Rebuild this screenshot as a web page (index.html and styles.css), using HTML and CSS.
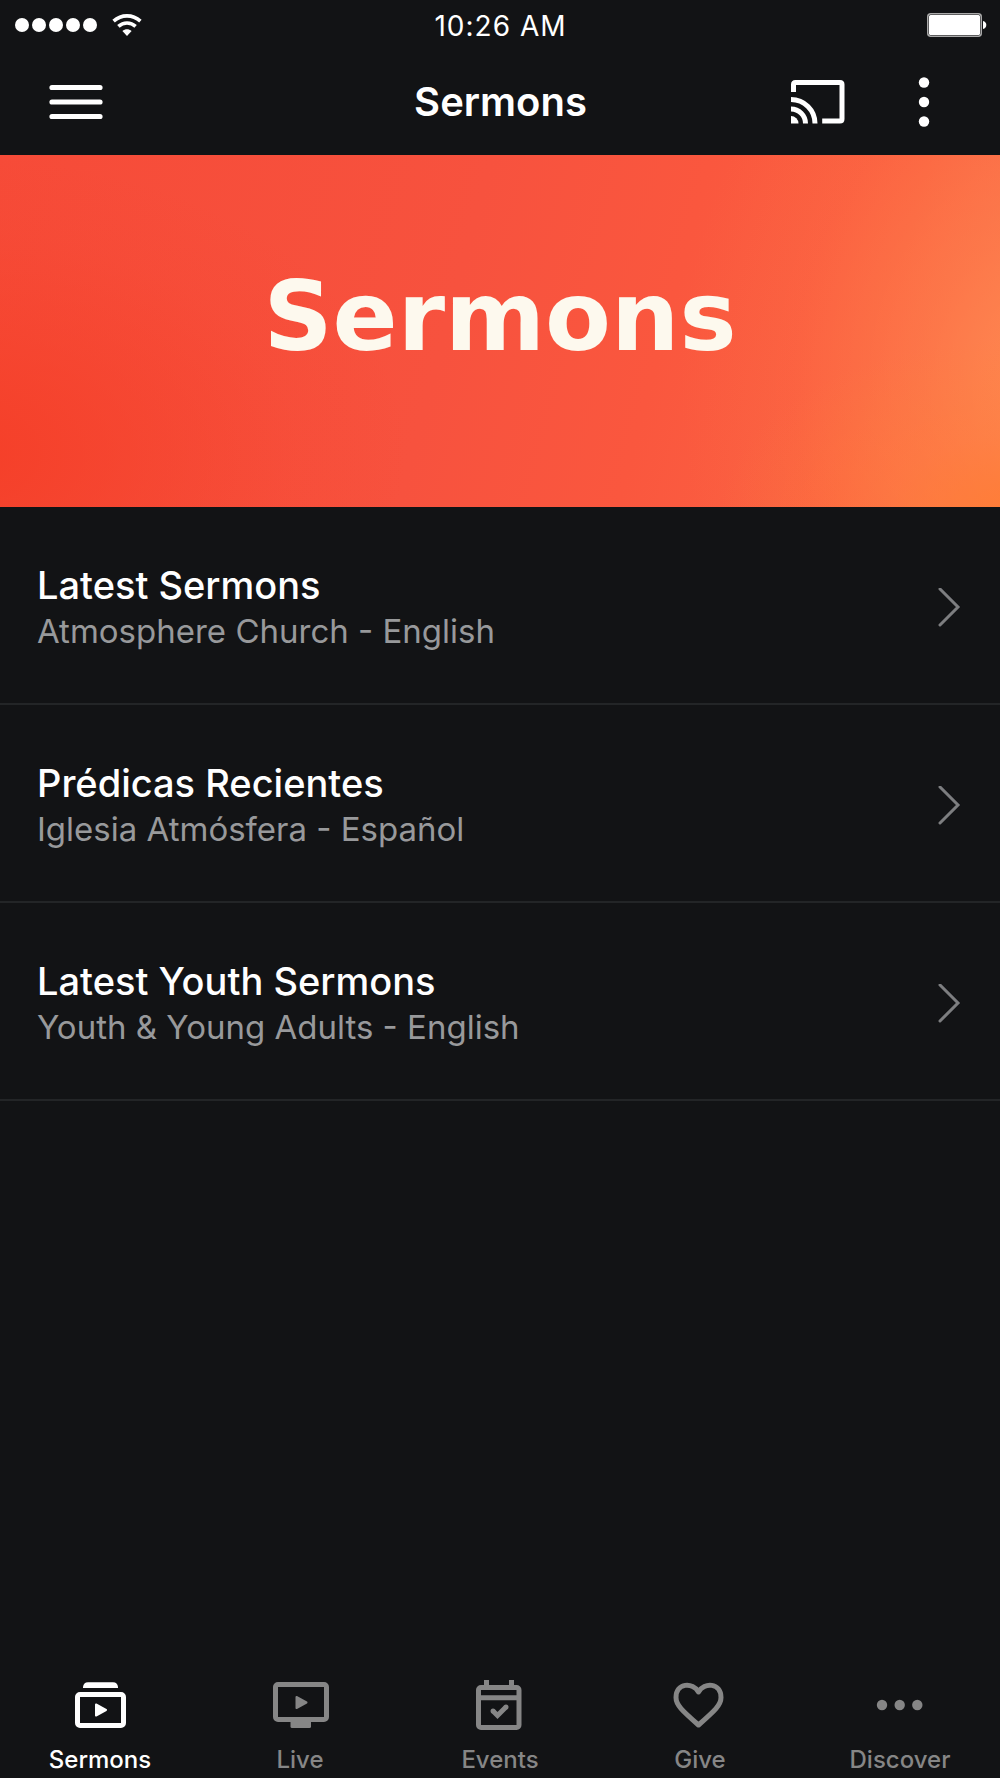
FILE: index.html
```html
<!DOCTYPE html>
<html lang="en">
<head>
<meta charset="utf-8">
<meta name="viewport" content="width=device-width, initial-scale=1">
<title>Sermons</title>
<link rel="stylesheet" href="styles.css">
</head>
<body>
<div class="app">
  <div class="status">
    <div class="status-left">
      <svg width="84" height="16" viewBox="0 0 84 16" fill="#fff" aria-hidden="true"><circle cx="8" cy="8" r="7"/><circle cx="25" cy="8" r="7"/><circle cx="42" cy="8" r="7"/><circle cx="59" cy="8" r="7"/><circle cx="76" cy="8" r="7"/></svg>
      <svg width="30" height="24" viewBox="0 0 30 24" aria-hidden="true"><g fill="none" stroke="#fff" stroke-width="3.6"><path d="M1.6 8.2C9.4 1.1 20.6 1.1 28.4 8.2"/><path d="M6.4 13.4C11.4 8.9 18.6 8.9 23.6 13.4"/></g><path d="M10.4 18C13.1 15.6 16.9 15.6 19.6 18L15 23Z" fill="#fff"/></svg>
    </div>
    <time class="clock" datetime="10:26">10:26 AM</time>
    <div class="status-right">
      <svg width="60" height="24" viewBox="0 0 60 24" aria-hidden="true"><rect x=".75" y=".75" width="53.5" height="22.5" rx="3" fill="none" stroke="#aaa" stroke-width="1.5"/><rect x="2" y="2" width="51" height="20" rx="1.5" fill="#fff"/><path d="M56 8C60.4 8.5 60.4 15.5 56 16Z" fill="#fff"/></svg>
    </div>
  </div>

  <header class="header">
    <button class="icon-button" type="button" aria-label="Menu">
      <svg width="54" height="36" viewBox="0 0 54 36" stroke="#fff" stroke-width="5.2" stroke-linecap="round"><path d="M3 3.5H51M3 18H51M3 32.5H51"/></svg>
    </button>
    <h1 class="title">Sermons</h1>
    <div class="actions">
      <button class="icon-button" type="button" aria-label="Cast">
        <svg width="54" height="44" viewBox="0 0 54 44" fill="none" stroke="#fff" stroke-width="5"><path d="M2.5 12V4.5Q2.5 2.5 4.5 2.5H49Q51 2.5 51 4.5V39Q51 41 49 41H31.2"/><path d="M0 19.5A24 24 0 0 1 24 43.5M0 29A14.5 14.5 0 0 1 14.5 43.5"/><path d="M0 36A7.5 7.5 0 0 1 7.5 43.5H0Z" fill="#fff" stroke="none"/></svg>
      </button>
      <button class="icon-button" type="button" aria-label="More options">
        <svg width="12" height="50" viewBox="0 0 12 50" fill="#fff"><circle cx="6" cy="5.5" r="5.2"/><circle cx="6" cy="25" r="5.2"/><circle cx="6" cy="44.5" r="5.2"/></svg>
      </button>
    </div>
  </header>

  <main class="main">
    <section class="banner"><h2 class="banner-title">Sermons</h2></section>
    <ul class="list">
      <li><a class="row" href="#latest">
        <span class="row-text"><span class="row-title">Latest Sermons</span><span class="row-sub">Atmosphere Church - English</span></span>
        <svg class="chevron" width="24" height="40" viewBox="0 0 24 40" aria-hidden="true"><path d="M3 1L21 19L3 37"/></svg>
      </a></li>
      <li><a class="row" href="#recientes">
        <span class="row-text" lang="es"><span class="row-title">Prédicas Recientes</span><span class="row-sub">Iglesia Atmósfera - Español</span></span>
        <svg class="chevron" width="24" height="40" viewBox="0 0 24 40" aria-hidden="true"><path d="M3 1L21 19L3 37"/></svg>
      </a></li>
      <li><a class="row" href="#youth">
        <span class="row-text"><span class="row-title">Latest Youth Sermons</span><span class="row-sub">Youth &amp; Young Adults - English</span></span>
        <svg class="chevron" width="24" height="40" viewBox="0 0 24 40" aria-hidden="true"><path d="M3 1L21 19L3 37"/></svg>
      </a></li>
    </ul>
  </main>

  <nav class="tabs" aria-label="Main">
    <a class="tab tab-active" href="#sermons" aria-current="page">
      <svg class="tab-icon" viewBox="0 0 60 60" aria-hidden="true"><path d="M13 13V12Q13.5 7.3 18 7.3H43Q47.5 7.3 48 12V13Z" fill="currentColor"/><rect x="7.5" y="19.5" width="46" height="31" rx="2.5" fill="none" stroke="currentColor" stroke-width="5"/><path d="M26 29.5L36 35L26 40.5Z" fill="currentColor" stroke="currentColor" stroke-width="2" stroke-linejoin="round"/></svg>
      <span>Sermons</span>
    </a>
    <a class="tab" href="#live">
      <svg class="tab-icon" viewBox="0 0 60 60" aria-hidden="true"><rect x="5.5" y="9.5" width="51" height="35" rx="2.5" fill="none" stroke="currentColor" stroke-width="5"/><path d="M20.5 46H41V51.5Q41 53 39.5 53H22Q20.5 53 20.5 51.5Z" fill="currentColor"/><path d="M26.5 22L36.5 27.5L26.5 33Z" fill="currentColor" stroke="currentColor" stroke-width="2" stroke-linejoin="round"/></svg>
      <span>Live</span>
    </a>
    <a class="tab" href="#events">
      <svg class="tab-icon" viewBox="0 0 60 60" aria-hidden="true" fill="none" stroke="currentColor" stroke-width="5"><rect x="8.5" y="12.5" width="40.5" height="40" rx="2.5"/><path d="M16.5 5V12M41.5 5V12M8 22.7H49"/><path d="M23 36L27.5 40.5L36 32"/><g fill="currentColor" stroke="none"><circle cx="23" cy="36" r="2.5"/><circle cx="36" cy="32" r="2.5"/></g></svg>
      <span>Events</span>
    </a>
    <a class="tab" href="#give">
      <svg class="tab-icon" viewBox="0 0 60 60" aria-hidden="true" fill="none" stroke="currentColor" stroke-width="5" stroke-linejoin="round"><path d="M28.5 17C23 7 6 7.5 6 22.5C6 30 12 35.5 28.5 50C45 35.5 51 30 51 22.5C51 7.5 34 7 28.5 17Z"/></svg>
      <span>Give</span>
    </a>
    <a class="tab" href="#discover">
      <svg class="tab-icon" viewBox="0 0 60 60" aria-hidden="true" fill="currentColor"><circle cx="12" cy="30" r="5.2"/><circle cx="29.7" cy="30" r="5.2"/><circle cx="47.3" cy="30" r="5.2"/></svg>
      <span>Discover</span>
    </a>
  </nav>
</div>
</body>
</html>
```
FILE: styles.css
```css
* { box-sizing: border-box; }

body {
  margin: 0;
  background: #121315;
  color: #fff;
  font-family: Inter, "Liberation Sans", sans-serif;
}

svg { display: block; }

.app {
  display: flex;
  flex-direction: column;
  min-height: 100vh;
}

.status {
  display: grid;
  grid-template-columns: 1fr auto 1fr;
  align-items: center;
  height: 50px;
  padding: 0 13px 0 14px;
}

.status-left {
  display: flex;
  align-items: center;
  gap: 14px;
}

.status-right { justify-self: end; }

.clock {
  padding-top: 2px;
  font-size: 28px;
  line-height: 32px;
  letter-spacing: 1px;
}

.header {
  display: grid;
  grid-template-columns: 1fr auto 1fr;
  align-items: center;
  height: 105px;
  padding: 0 70px 2px 49px;
}

.icon-button {
  justify-self: start;
  padding: 0;
  border: 0;
  background: none;
  color: inherit;
  cursor: pointer;
}

.title {
  margin: 0 0 0 22px;
  font-size: 40px;
  font-weight: 600;
  line-height: 48px;
}

.actions {
  display: flex;
  align-items: center;
  justify-self: end;
  gap: 73px;
}

.main { flex: 1; }

.banner {
  display: flex;
  align-items: center;
  justify-content: center;
  aspect-ratio: 1000 / 352;
  padding-bottom: 28px;
  background:
    radial-gradient(ellipse 30% 50% at 102% 102%, #ff7d36 0%, rgba(255, 127, 56, 0.35) 45%, rgba(255, 127, 56, 0) 100%),
    radial-gradient(ellipse 38% 130% at 106% 65%, #ff8a50 0%, rgba(255, 132, 76, 0.55) 35%, rgba(255, 125, 70, 0.15) 70%, rgba(255, 120, 65, 0) 100%),
    radial-gradient(ellipse 45% 85% at -4% 85%, #f53f28 0%, rgba(245, 63, 40, 0.5) 40%, rgba(245, 63, 40, 0.12) 75%, rgba(245, 63, 40, 0) 100%),
    linear-gradient(105deg, #f64b38 0%, #f7523e 45%, #fa573e 65%, #fb6242 85%, #f9724f 100%);
}

.banner-title {
  margin: 0;
  color: #fdf9ee;
  font-family: "DejaVu Sans", sans-serif;
  font-size: 96px;
  font-weight: 700;
  line-height: 112px;
}

.list {
  margin: 0;
  padding: 0;
  list-style: none;
}

.row {
  display: flex;
  align-items: center;
  justify-content: space-between;
  height: 198px;
  padding: 5px 39px 0 37px;
  border-bottom: 2px solid #232527;
  color: inherit;
  text-decoration: none;
}

.row-text {
  display: flex;
  flex-direction: column;
}

.row-title {
  font-size: 38px;
  font-weight: 500;
  line-height: 46px;
}

.row-sub {
  color: #98999b;
  font-size: 33px;
  line-height: 46px;
}

.chevron {
  fill: none;
  stroke: #7d7e80;
  stroke-width: 3;
  stroke-linecap: round;
}

.tabs {
  display: grid;
  grid-template-columns: repeat(5, 1fr);
  padding: 8px 0 3px;
}

.tab {
  display: flex;
  flex-direction: column;
  align-items: center;
  gap: 10px;
  color: #868686;
  font-size: 24px;
  font-weight: 500;
  line-height: 30px;
  text-decoration: none;
}

.tab-active { color: #fff; }

.tab-icon {
  width: 60px;
  height: 60px;
}
```
